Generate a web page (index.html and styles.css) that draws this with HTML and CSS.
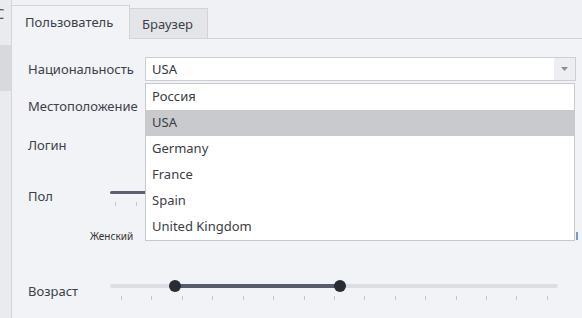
FILE: index.html
```html
<!DOCTYPE html>
<html lang="ru">
<head>
    <meta charset="UTF-8">
    <title>Профиль</title>
    <link rel="stylesheet" href="styles.css">
</head>
<body>
    <div class="app">
        <div class="side">
            <span class="side-char">C</span>
            <div class="side-band"></div>
        </div>

        <div class="window">
            <div class="tabs">
                <div class="tab active">Пользователь</div>
                <div class="tab">Браузер</div>
            </div>

            <div class="panel">
                <div class="row">
                    <label class="label">Национальность</label>
                    <div class="combo">
                        <span class="combo-value">USA</span>
                        <span class="combo-btn">
                            <svg width="7" height="4" viewBox="0 0 7 4"><path d="M0 0h7L3.5 4z" fill="#8a8d93"/></svg>
                        </span>
                        <!-- open dropdown -->
                        <ul class="combo-list">
                            <li>Россия</li>
                            <li class="selected">USA</li>
                            <li>Germany</li>
                            <li>France</li>
                            <li>Spain</li>
                            <li>United Kingdom</li>
                        </ul>
                    </div>
                </div>

                <div class="row row-loc">
                    <label class="label">Местоположение</label>
                </div>

                <div class="row row-login">
                    <label class="label">Логин</label>
                </div>

                <div class="row row-sex">
                    <label class="label label-short">Пол</label>
                    <div class="slider">
                        <div class="track dark"></div>
                        <div class="ticks ticks-sex">
                            <i></i><i></i>
                        </div>
                    </div>
                </div>
                <div class="sex-labels">
                    <span class="sex-f">Женский</span>
                    <span class="sex-m"></span>
                </div>

                <div class="row row-age">
                    <label class="label label-short">Возраст</label>
                    <div class="slider">
                        <div class="track"></div>
                        <div class="range" style="left: 65px; width: 165px;"></div>
                        <span class="thumb" style="left: 65px;"></span>
                        <span class="thumb" style="left: 230px;"></span>
                        <div class="ticks ticks-age">
                            <i></i><i></i><i></i><i></i><i></i><i></i><i></i><i></i>
                            <i></i><i></i><i></i><i></i><i></i><i></i><i></i>
                        </div>
                    </div>
                </div>
            </div>
        </div>
    </div>
</body>
</html>
```

FILE: styles.css
```css
body {
    margin: 0;
    font-family: "Noto Sans", "Open Sans", sans-serif;
    font-size: 13px;
    color: #3b4049;
    background: #f1f2f5;
}

.app {
    display: flex;
    width: 582px;
    height: 318px;
    overflow: hidden;
}

/* left neighbour strip */
.side {
    width: 11px;
    background: #eaebee;
    position: relative;
    flex-shrink: 0;
    overflow: hidden;
}

.side-char {
    position: absolute;
    left: -5px;
    top: 3px;
    font-size: 15px;
    color: #555;
}

.side-band {
    margin-top: 45px;
    height: 46px;
    background: #d7d9dc;
}

.window {
    flex: 1;
    border-left: 1px solid #d3d6da;
    background: #f0f1f4;
    display: flex;
    flex-direction: column;
}

/* tabs */
.tabs {
    display: flex;
    align-items: flex-end;
    height: 38px;
    border-bottom: 1px solid #d0d3d8;
}

.tab {
    height: 30px;
    line-height: 30px;
    padding: 0 12px;
    background: #e3e5e8;
    border: 1px solid #d0d3d8;
    border-bottom: none;
    border-left: none;
    box-sizing: border-box;
    width: 78px;
}

.tab.active {
    width: 118px;
    height: 34px;
    line-height: 33px;
    margin-bottom: -1px;
    padding-left: 13px;
    background: #f2f3f6;
}

/* form */
.panel {
    flex: 1;
    background: #f2f3f6;
    padding: 18px 4px 0 16px;
}

.row {
    display: flex;
    align-items: center;
    height: 24px;
}

.label {
    width: 117px;
    flex-shrink: 0;
}

.label-short {
    width: 82px;
}

.row-loc { margin-top: 13px; }
.row-login { margin-top: 15px; }
.row-sex { margin-top: 23px; height: 32px; }
.row-age { margin-top: 38px; height: 22px; }

/* combo box */
.combo {
    position: relative;
    display: flex;
    width: 431px;
    height: 24px;
    box-sizing: border-box;
    background: #fff;
    border: 1px solid #cbced3;
}

.combo-value {
    flex: 1;
    padding-left: 6px;
    line-height: 22px;
    color: #333;
}

.combo-btn {
    width: 21px;
    display: flex;
    align-items: center;
    justify-content: center;
    background: #eceef1;
}

.combo-list {
    position: absolute;
    top: 24px;
    left: -1px;
    width: 430px;
    margin: 1px 0 0;
    padding: 0;
    list-style: none;
    background: #fff;
    border: 1px solid #c6c9ce;
    box-sizing: border-box;
    z-index: 10;
}

.combo-list li {
    height: 26px;
    line-height: 25px;
    padding-left: 6px;
    color: #3a3d42;
}

.combo-list li.selected {
    background: #c9cacd;
}

/* sliders */
.slider {
    position: relative;
    width: 448px;
    height: 100%;
}

.track {
    position: absolute;
    left: 0;
    right: 0;
    top: 4px;
    height: 4px;
    border-radius: 2px;
    background: #dcdee3;
}

.row-sex .track {
    top: 11px;
    height: 3px;
}

.track.dark {
    background: #5b6171;
}

.range {
    position: absolute;
    top: 4px;
    height: 4px;
    background: #565c6b;
}

.thumb {
    position: absolute;
    top: 0;
    width: 12px;
    height: 12px;
    margin-left: -6px;
    border-radius: 50%;
    background: #272c35;
}

.ticks {
    position: absolute;
    display: flex;
    justify-content: space-between;
}

.ticks i {
    width: 1px;
    height: 4px;
    background: #c3c6cb;
}

.ticks-age {
    left: 11px;
    width: 427px;
    top: 16px;
}

.ticks-sex {
    left: 5px;
    width: 22px;
    top: 22px;
}

.sex-labels {
    display: flex;
    justify-content: space-between;
    margin: 18px 0 0 62px;
    height: 12px;
    width: 488px;
}

.sex-f {
    font-size: 10px;
    line-height: 12px;
    color: #333;
}

.sex-m {
    width: 2px;
    height: 8px;
    background: #6f9bd6;
    margin-top: 2px;
}
```
